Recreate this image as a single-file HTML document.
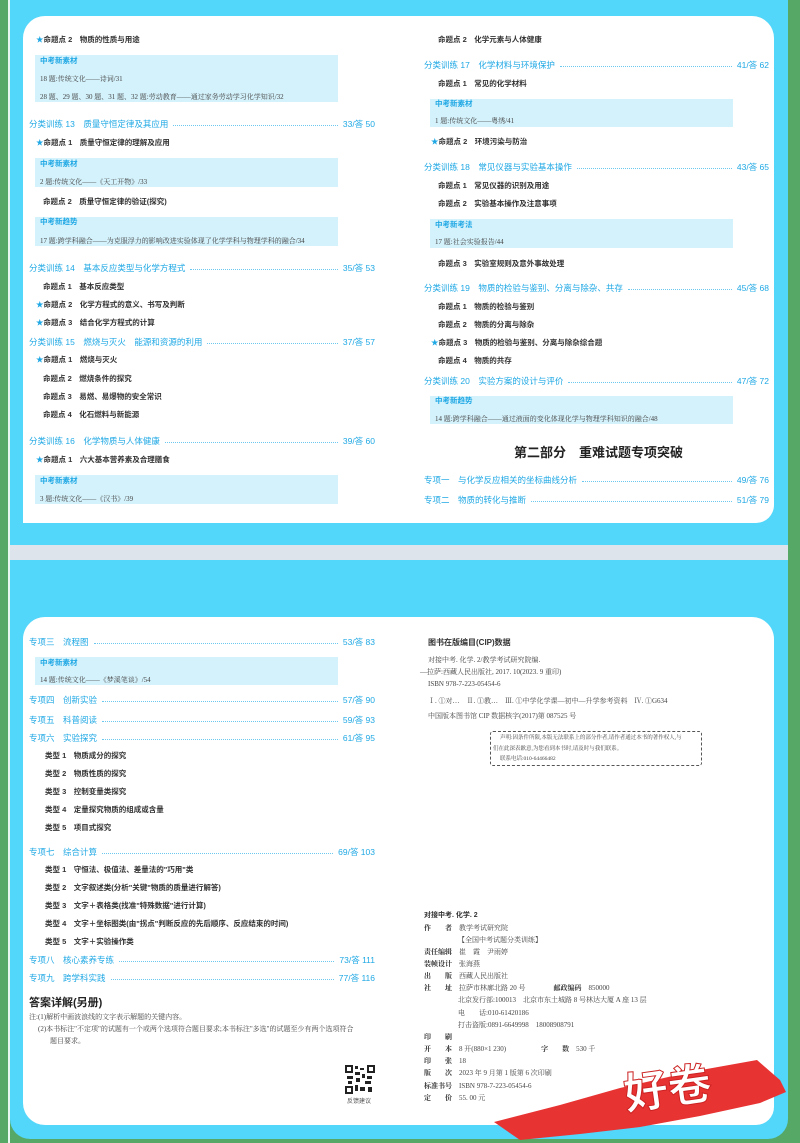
<!DOCTYPE html>
<html><head><meta charset="utf-8">
<style>
*{margin:0;padding:0;box-sizing:border-box}
body{width:800px;height:1143px;position:relative;overflow:hidden;background:#55a865;font-family:"Liberation Sans","Noto Sans CJK SC",sans-serif;}
.a{position:absolute;white-space:nowrap;font-size:7.5px;line-height:10px;color:#333;}
.cy{position:absolute;background:#52d6f9}
.pan{position:absolute;background:#fff}
.t{position:absolute;display:flex;align-items:center;height:10px;font-size:8.5px;color:#1fa8e4;white-space:nowrap}
.t .l{flex:1;border-bottom:1px dotted #6cc8ee;margin:0 5px;height:1px;margin-top:2px}
.t .n{width:62px;display:inline-block}
.box{position:absolute;background:#d4f2fc}
.bh{color:#1fa8e4;font-weight:bold}
.s{color:#1fa8e4}
.k{font-weight:bold;color:#333}
.f{font-family:"Liberation Serif","Noto Serif CJK SC",serif;color:#444;font-size:7px}
</style></head><body>
<div style="position:absolute;left:8px;top:0;width:2px;height:1143px;background:#e8f7f0"></div>
<div class="cy" style="left:10px;top:0;width:778px;height:545px"></div>
<div style="position:absolute;left:10px;top:545px;width:778px;height:15px;background:#dde4eb"></div>
<div class="cy" style="left:10px;top:560px;width:778px;height:579px;border-radius:0 0 20px 20px"></div>
<div class="pan" style="left:23px;top:16px;width:751px;height:507px;border-radius:22px 22px 18px 0"></div>
<div class="pan" style="left:23px;top:617px;width:751px;height:508px;border-radius:22px 22px 18px 22px"></div>

<!-- top left -->
<div class="a" style="left:36px;top:35px"><span class="s">★</span><b>命题点 2　物质的性质与用途</b></div>
<div class="box" style="left:35px;top:55px;width:303px;height:47px"></div>
<div class="a bh" style="left:40px;top:56px">中考新素材</div>
<div class="a f" style="left:40px;top:74px">18 题:传统文化——诗词/31</div>
<div class="a f" style="left:40px;top:92px">28 题、29 题、30 题、31 题、32 题:劳动教育——通过家务劳动学习化学知识/32</div>
<div class="t" style="left:29px;top:119px;width:346px">分类训练 13　质量守恒定律及其应用<span class="l"></span>33/答 50</div>
<div class="a" style="left:36px;top:138px"><span class="s">★</span><b>命题点 1　质量守恒定律的理解及应用</b></div>
<div class="box" style="left:35px;top:158px;width:303px;height:29px"></div>
<div class="a bh" style="left:40px;top:159px">中考新素材</div>
<div class="a f" style="left:40px;top:177px">2 题:传统文化——《天工开物》/33</div>
<div class="a k" style="left:43px;top:197px">命题点 2　质量守恒定律的验证(探究)</div>
<div class="box" style="left:35px;top:217px;width:303px;height:29px"></div>
<div class="a bh" style="left:40px;top:217px">中考新趋势</div>
<div class="a f" style="left:40px;top:236px">17 题:跨学科融合——为克服浮力的影响改进实验体现了化学学科与物理学科的融合/34</div>
<div class="t" style="left:29px;top:263px;width:346px">分类训练 14　基本反应类型与化学方程式<span class="l"></span>35/答 53</div>
<div class="a k" style="left:43px;top:282px">命题点 1　基本反应类型</div>
<div class="a k" style="left:36px;top:300px"><span class="s">★</span>命题点 2　化学方程式的意义、书写及判断</div>
<div class="a k" style="left:36px;top:318px"><span class="s">★</span>命题点 3　结合化学方程式的计算</div>
<div class="t" style="left:29px;top:337px;width:346px">分类训练 15　燃烧与灭火　能源和资源的利用<span class="l"></span>37/答 57</div>
<div class="a k" style="left:36px;top:355px"><span class="s">★</span>命题点 1　燃烧与灭火</div>
<div class="a k" style="left:43px;top:374px">命题点 2　燃烧条件的探究</div>
<div class="a k" style="left:43px;top:392px">命题点 3　易燃、易爆物的安全常识</div>
<div class="a k" style="left:43px;top:410px">命题点 4　化石燃料与新能源</div>
<div class="t" style="left:29px;top:436px;width:346px">分类训练 16　化学物质与人体健康<span class="l"></span>39/答 60</div>
<div class="a k" style="left:36px;top:455px"><span class="s">★</span>命题点 1　六大基本营养素及合理膳食</div>
<div class="box" style="left:35px;top:475px;width:303px;height:29px"></div>
<div class="a bh" style="left:40px;top:476px">中考新素材</div>
<div class="a f" style="left:40px;top:494px">3 题:传统文化——《汉书》/39</div>

<!-- top right -->
<div class="a k" style="left:438px;top:35px">命题点 2　化学元素与人体健康</div>
<div class="t" style="left:424px;top:60px;width:345px">分类训练 17　化学材料与环境保护<span class="l"></span>41/答 62</div>
<div class="a k" style="left:438px;top:79px">命题点 1　常见的化学材料</div>
<div class="box" style="left:430px;top:99px;width:303px;height:28px"></div>
<div class="a bh" style="left:435px;top:99px">中考新素材</div>
<div class="a f" style="left:435px;top:116px">1 题:传统文化——粤绣/41</div>
<div class="a k" style="left:431px;top:137px"><span class="s">★</span>命题点 2　环境污染与防治</div>
<div class="t" style="left:424px;top:162px;width:345px">分类训练 18　常见仪器与实验基本操作<span class="l"></span>43/答 65</div>
<div class="a k" style="left:438px;top:181px">命题点 1　常见仪器的识别及用途</div>
<div class="a k" style="left:438px;top:199px">命题点 2　实验基本操作及注意事项</div>
<div class="box" style="left:430px;top:219px;width:303px;height:29px"></div>
<div class="a bh" style="left:435px;top:220px">中考新考法</div>
<div class="a f" style="left:435px;top:237px">17 题:社会实验报告/44</div>
<div class="a k" style="left:438px;top:259px">命题点 3　实验室规则及意外事故处理</div>
<div class="t" style="left:424px;top:283px;width:345px">分类训练 19　物质的检验与鉴别、分离与除杂、共存<span class="l"></span>45/答 68</div>
<div class="a k" style="left:438px;top:302px">命题点 1　物质的检验与鉴别</div>
<div class="a k" style="left:438px;top:320px">命题点 2　物质的分离与除杂</div>
<div class="a k" style="left:431px;top:338px"><span class="s">★</span>命题点 3　物质的检验与鉴别、分离与除杂综合题</div>
<div class="a k" style="left:438px;top:356px">命题点 4　物质的共存</div>
<div class="t" style="left:424px;top:376px;width:345px">分类训练 20　实验方案的设计与评价<span class="l"></span>47/答 72</div>
<div class="box" style="left:430px;top:396px;width:303px;height:28px"></div>
<div class="a bh" style="left:435px;top:396px">中考新趋势</div>
<div class="a f" style="left:435px;top:414px">14 题:跨学科融合——通过液面的变化体现化学与物理学科知识的融合/48</div>
<div class="a" style="left:514px;top:444px;font-size:13px;line-height:18px;font-weight:bold;color:#222">第二部分　重难试题专项突破</div>
<div class="t" style="left:424px;top:475px;width:345px">专项一　与化学反应相关的坐标曲线分析<span class="l"></span>49/答 76</div>
<div class="t" style="left:424px;top:495px;width:345px">专项二　物质的转化与推断<span class="l"></span>51/答 79</div>

<!-- bottom left -->
<div class="t" style="left:29px;top:637px;width:346px">专项三　流程图<span class="l"></span>53/答 83</div>
<div class="box" style="left:35px;top:657px;width:303px;height:28px"></div>
<div class="a bh" style="left:40px;top:658px">中考新素材</div>
<div class="a f" style="left:40px;top:675px">14 题:传统文化——《梦溪笔谈》/54</div>
<div class="t" style="left:29px;top:695px;width:346px">专项四　创新实验<span class="l"></span>57/答 90</div>
<div class="t" style="left:29px;top:715px;width:346px">专项五　科普阅读<span class="l"></span>59/答 93</div>
<div class="t" style="left:29px;top:733px;width:346px">专项六　实验探究<span class="l"></span>61/答 95</div>
<div class="a k" style="left:45px;top:751px">类型 1　物质成分的探究</div>
<div class="a k" style="left:45px;top:769px">类型 2　物质性质的探究</div>
<div class="a k" style="left:45px;top:787px">类型 3　控制变量类探究</div>
<div class="a k" style="left:45px;top:805px">类型 4　定量探究物质的组成或含量</div>
<div class="a k" style="left:45px;top:823px">类型 5　项目式探究</div>
<div class="t" style="left:29px;top:847px;width:346px">专项七　综合计算<span class="l"></span>69/答 103</div>
<div class="a k" style="left:45px;top:865px">类型 1　守恒法、极值法、差量法的"巧用"类</div>
<div class="a k" style="left:45px;top:883px">类型 2　文字叙述类(分析"关键"物质的质量进行解答)</div>
<div class="a k" style="left:45px;top:901px">类型 3　文字＋表格类(找准"特殊数据"进行计算)</div>
<div class="a k" style="left:45px;top:919px">类型 4　文字＋坐标图类(由"拐点"判断反应的先后顺序、反应结束的时间)</div>
<div class="a k" style="left:45px;top:937px">类型 5　文字＋实验操作类</div>
<div class="t" style="left:29px;top:955px;width:346px">专项八　核心素养专练<span class="l"></span>73/答 111</div>
<div class="t" style="left:29px;top:973px;width:346px">专项九　跨学科实践<span class="l"></span>77/答 116</div>
<div class="a" style="left:29px;top:996px;font-size:11px;line-height:14px;font-weight:bold;color:#222">答案详解(另册)</div>
<div class="a f" style="left:29px;top:1012px">注:(1)解析中画波浪线的文字表示解题的关键内容。</div>
<div class="a f" style="left:38px;top:1024px">(2)本书标注"不定项"的试题有一个或两个选项符合题目要求;本书标注"多选"的试题至少有两个选项符合</div>
<div class="a f" style="left:50px;top:1036px">题目要求。</div>
<svg style="position:absolute;left:345px;top:1065px" width="30" height="29" viewBox="0 0 30 29">
<rect width="30" height="29" fill="#fff"/>
<g fill="#222"><rect x="0" y="0" width="8" height="8"/><rect x="22" y="0" width="8" height="8"/><rect x="0" y="21" width="8" height="8"/>
<rect x="10" y="1" width="3" height="3"/><rect x="15" y="3" width="4" height="2"/><rect x="10" y="7" width="5" height="3"/><rect x="17" y="9" width="3" height="4"/><rect x="2" y="11" width="6" height="3"/><rect x="22" y="11" width="5" height="3"/><rect x="11" y="13" width="4" height="4"/><rect x="20" y="16" width="6" height="3"/><rect x="10" y="20" width="3" height="6"/><rect x="15" y="22" width="5" height="4"/><rect x="23" y="22" width="4" height="5"/><rect x="3" y="16" width="4" height="3"/></g>
<g fill="#fff"><rect x="2" y="2" width="4" height="4"/><rect x="24" y="2" width="4" height="4"/><rect x="2" y="23" width="4" height="4"/></g></svg>
<div class="a" style="left:347px;top:1097px;font-size:6px;color:#555">反馈建议</div>

<!-- bottom right -->
<div class="a k" style="left:428px;top:638px;font-size:8px">图书在版编目(CIP)数据</div>
<div class="a f" style="left:428px;top:655px">对接中考. 化学. 2/教学考试研究院编.</div>
<div class="a f" style="left:420px;top:667px">—拉萨:西藏人民出版社, 2017. 10(2023. 9 重印)</div>
<div class="a f" style="left:428px;top:679px">ISBN 978-7-223-05454-6</div>
<div class="a f" style="left:428px;top:696px">Ⅰ. ①对…　Ⅱ. ①教…　Ⅲ. ①中学化学课—初中—升学参考资料　Ⅳ. ①G634</div>
<div class="a f" style="left:428px;top:711px">中国版本图书馆 CIP 数据核字(2017)第 087525 号</div>
<div style="position:absolute;left:490px;top:731px;width:212px;height:35px;border:1px dashed #555;border-radius:3px"></div>
<div class="a f" style="left:500px;top:733px;font-size:5.5px">声明:因条件所限,本版无法联系上的部分作者,请作者通过本书的著作权人,与</div>
<div class="a f" style="left:493px;top:744px;font-size:5.5px">们在此深表歉意,为您看到本书时,请及时与我们联系。</div>
<div class="a f" style="left:500px;top:754px;font-size:5.5px">联系电话:010-64466482</div>
<div class="a k" style="left:424px;top:911px;font-size:7px">对接中考. 化学. 2</div>
<div class="a f" style="left:424px;top:923px"><b style="color:#333">作　　者</b>　教学考试研究院</div>
<div class="a f" style="left:458px;top:935px">【全国中考试题分类训练】</div>
<div class="a f" style="left:424px;top:947px"><b style="color:#333">责任编辑</b>　崔　霞　尹雨婷</div>
<div class="a f" style="left:424px;top:959px"><b style="color:#333">装帧设计</b>　张海燕</div>
<div class="a f" style="left:424px;top:971px"><b style="color:#333">出　　版</b>　西藏人民出版社</div>
<div class="a f" style="left:424px;top:983px"><b style="color:#333">社　　址</b>　拉萨市林廓北路 20 号　　　　<b style="color:#333">邮政编码</b>　850000</div>
<div class="a f" style="left:458px;top:995px">北京发行部:100013　北京市东土城路 8 号林达大厦 A 座 13 层</div>
<div class="a f" style="left:458px;top:1008px">电　　话:010-61420186</div>
<div class="a f" style="left:458px;top:1020px">打击盗版:0891-6649998　18008908791</div>
<div class="a f" style="left:424px;top:1032px"><b style="color:#333">印　　刷</b></div>
<div class="a f" style="left:424px;top:1044px"><b style="color:#333">开　　本</b>　8 开(880×1 230)　　　　　<b style="color:#333">字　　数</b>　530 千</div>
<div class="a f" style="left:424px;top:1056px"><b style="color:#333">印　　张</b>　18</div>
<div class="a f" style="left:424px;top:1068px"><b style="color:#333">版　　次</b>　2023 年 9 月第 1 版第 6 次印刷</div>
<div class="a f" style="left:424px;top:1081px"><b style="color:#333">标准书号</b>　ISBN 978-7-223-05454-6</div>
<div class="a f" style="left:424px;top:1093px"><b style="color:#333">定　　价</b>　55. 00 元</div>

<svg style="position:absolute;left:0;top:0" width="800" height="1143">
<polygon points="494,1122 560,1105 620,1088 690,1072 757,1060 780,1080 786,1092 760,1103 700,1116 640,1127 580,1134 520,1140" fill="#e83333"/>
</svg>
<div class="a" style="left:624px;top:1062px;font-size:44px;line-height:56px;font-weight:bold;color:#fff;transform:rotate(-8deg);-webkit-text-stroke:1px #c22;">好卷</div>
</body></html>
